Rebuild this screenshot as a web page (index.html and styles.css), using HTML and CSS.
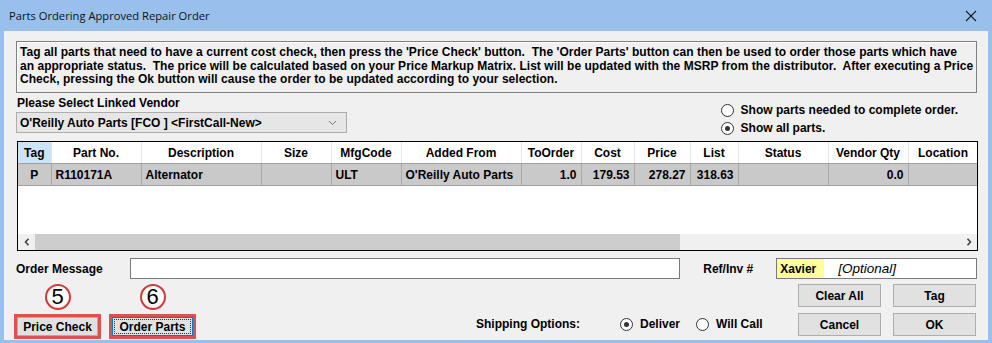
FILE: index.html
```html
<!DOCTYPE html>
<html lang="en">
<head>
  <meta charset="UTF-8" />
  <title>Parts Ordering Approved Repair Order</title>
  <link rel="stylesheet" href="styles.css">
</head>
<body>

<div class="window">
  <div class="titlebar">
    <span class="title">Parts Ordering Approved Repair Order</span>
    <svg class="close" width="12" height="12" viewBox="0 0 12 12"><path d="M1 1L11 11M11 1L1 11" stroke="#1a1a1a" stroke-width="1.1"/></svg>
  </div>

  <div class="client">
    <div class="notice">
      Tag all parts that need to have a current cost check, then press the 'Price Check' button.&nbsp; The 'Order Parts' button can then be used to order those parts which have<br>
      an appropriate status.&nbsp; The price will be calculated based on your Price Markup Matrix. List will be updated with the MSRP from the distributor.&nbsp; After executing a Price<br>
      Check, pressing the Ok button will cause the order to be updated according to your selection.
    </div>

    <div class="vendor-row">
      <div class="vendor">
        <div class="lbl">Please Select Linked Vendor</div>
        <div class="combo">
          <span>O'Reilly Auto Parts [FCO ] &lt;FirstCall-New&gt;</span>
          <svg width="9" height="6" viewBox="0 0 9 6"><path d="M1 1L4.5 4.5L8 1" fill="none" stroke="#777" stroke-width="1"/></svg>
        </div>
      </div>
      <div class="show-opts">
        <label class="radio"><span class="dot"></span>Show parts needed to complete order.</label>
        <label class="radio"><span class="dot on"></span>Show all parts.</label>
      </div>
    </div>

    <div class="grid">
      <table>
        <colgroup>
          <col style="width:33px"><col style="width:90px"><col style="width:120px"><col style="width:70px">
          <col style="width:70px"><col style="width:120px"><col style="width:60px"><col style="width:53px">
          <col style="width:56px"><col style="width:48px"><col style="width:90px"><col style="width:80px">
          <col style="width:70px">
        </colgroup>
        <thead>
          <tr>
            <th class="sel">Tag</th><th>Part No.</th><th>Description</th><th>Size</th><th>MfgCode</th>
            <th>Added From</th><th>ToOrder</th><th>Cost</th><th>Price</th><th>List</th>
            <th>Status</th><th>Vendor Qty</th><th>Location</th>
          </tr>
        </thead>
        <tbody>
          <tr>
            <td class="c">P</td><td>R110171A</td><td>Alternator</td><td></td><td>ULT</td>
            <td>O'Reilly Auto Parts</td><td class="n">1.0</td><td class="n">179.53</td><td class="n">278.27</td>
            <td class="n">318.63</td><td></td><td class="n">0.0</td><td></td>
          </tr>
        </tbody>
      </table>
      <div class="hscroll">
        <span class="arrow"><svg width="6" height="8" viewBox="0 0 6 8"><path d="M4.5 0.8L1.5 4L4.5 7.2" fill="none" stroke="#444" stroke-width="1.6"/></svg></span>
        <div class="track"><div class="thumb"></div></div>
        <span class="arrow"><svg width="6" height="8" viewBox="0 0 6 8"><path d="M1.5 0.8L4.5 4L1.5 7.2" fill="none" stroke="#444" stroke-width="1.6"/></svg></span>
      </div>
    </div>

    <div class="msg-row">
      <span class="lbl msg-lbl">Order Message</span>
      <div class="field msg-field"></div>
      <span class="lbl ref-lbl">Ref/Inv #</span>
      <div class="field ref-field"><span class="hl">Xavier</span><em>[Optional]</em></div>
    </div>

    <div class="bottom">
      <div class="steps">
        <div class="step">
          <span class="badge">5</span>
          <div class="mark"><button class="btn">Price Check</button></div>
        </div>
        <div class="step">
          <span class="badge">6</span>
          <div class="mark"><button class="btn focus">Order Parts</button></div>
        </div>
      </div>
      <div class="shipping">
        <span class="lbl ship-lbl">Shipping Options:</span>
        <label class="radio"><span class="dot on"></span>Deliver</label>
        <label class="radio"><span class="dot"></span>Will Call</label>
      </div>
      <div class="actions">
        <button class="btn">Clear All</button>
        <button class="btn">Tag</button>
        <button class="btn">Cancel</button>
        <button class="btn">OK</button>
      </div>
    </div>
  </div>
</div>

</body>
</html>
```

FILE: styles.css
```css
body {
  margin: 0;
  padding: 0;
  font-family: "Liberation Sans", Arial, sans-serif;
  font-size: 12px;
  color: #000;
  overflow: hidden;
}
.window {
  width: 992px;
  height: 343px;
  background-color: #99c0ec;
  display: flex;
  flex-direction: column;
  box-sizing: border-box;
  padding: 0 4px 3px 4px;
}
.titlebar {
  height: 31px;
  display: flex;
  align-items: center;
  justify-content: space-between;
  padding: 0 11px 0 5px;
}
.title {
  font-family: "Open Sans", "Liberation Sans", sans-serif;
  font-size: 11.2px;
  color: #111;
}
.client {
  flex: 1;
  background-color: #f0f0f0;
  padding: 10px 11px 0 12px;
  display: flex;
  flex-direction: column;
  font-weight: bold;
}
.notice {
  border: 1px solid #7f7f7f;
  box-shadow: inset 1px 1px 0 #fff;
  padding: 4px 3px 5px 3px;
  line-height: 13.5px;
  height: 41px;
  white-space: nowrap;
  letter-spacing: 0.03px;
}
.vendor-row {
  display: flex;
  justify-content: space-between;
  margin-top: 3px;
  height: 45px;
}
.lbl {
  font-weight: bold;
}
.vendor .lbl {
  padding-left: 1px;
  line-height: 14px;
}
.combo {
  margin-top: 2px;
  border: 1px solid #adadad;
  background-color: #e6e6e6;
  display: flex;
  align-items: center;
  justify-content: space-between;
  padding: 0 9px 0 3px;
  box-sizing: border-box;
  width: 331px;
  height: 21px;
}
.show-opts {
  display: flex;
  flex-direction: column;
  padding-top: 7px;
  padding-right: 19px;
  gap: 4px;
}
.radio {
  display: flex;
  align-items: center;
  gap: 7px;
  font-weight: bold;
  line-height: 14px;
}
.dot {
  width: 11px;
  height: 11px;
  border: 1px solid #333;
  border-radius: 50%;
  background-color: #fff;
  position: relative;
}
.dot.on::after {
  content: "";
  position: absolute;
  left: 3px;
  top: 3px;
  width: 5px;
  height: 5px;
  border-radius: 50%;
  background-color: #333;
}
.grid {
  margin-left: 1px;
  width: 961px;
  height: 110px;
  box-sizing: border-box;
  border: 1px solid #000;
  background-color: #fff;
  display: flex;
  flex-direction: column;
  justify-content: space-between;
  overflow: hidden;
}
.grid table {
  border-collapse: collapse;
  table-layout: fixed;
  width: 960px;
}
.grid th {
  height: 21px;
  padding: 0;
  font-weight: bold;
  text-align: center;
  white-space: nowrap;
  border-right: 1px solid #e5e5e5;
  border-bottom: 1px solid #a0a0a0;
  background-color: #fff;
}
.grid th.sel {
  background-color: #cce4f7;
}
.grid td {
  height: 21px;
  padding: 0 4px;
  background-color: #c9c9c9;
  border-right: 1px solid #a8a8a8;
  border-bottom: 1px solid #a0a0a0;
  white-space: nowrap;
  overflow: hidden;
}
.grid td.c {
  text-align: center;
}
.grid td.n {
  text-align: right;
}
.hscroll {
  height: 16px;
  display: flex;
  align-items: center;
  background-color: #f0f0f0;
}
.arrow {
  width: 17px;
  display: flex;
  justify-content: center;
  align-items: center;
}
.track {
  flex: 1;
  height: 100%;
}
.thumb {
  width: 645px;
  height: 100%;
  background-color: #cdcdcd;
}
.msg-row {
  display: flex;
  align-items: center;
  margin-top: 7px;
  height: 21px;
}
.msg-lbl {
  width: 114px;
}
.field {
  border: 1px solid #7a7a7a;
  background-color: #fff;
  box-sizing: border-box;
  height: 21px;
}
.msg-field {
  width: 551px;
}
.ref-lbl {
  margin-left: 23px;
  width: 73px;
}
.ref-field {
  width: 201px;
  display: flex;
  align-items: center;
}
.hl {
  background-color: #ffff99;
  height: 100%;
  display: flex;
  align-items: center;
  padding: 0 8px 0 3px;
}
.ref-field em {
  font-weight: normal;
  font-style: italic;
  font-size: 13.5px;
  margin-left: 14px;
}
.bottom {
  display: flex;
  align-items: flex-end;
  margin-top: 5px;
}
.steps {
  display: flex;
  gap: 8px;
  margin-left: -2px;
}
.step {
  display: flex;
  flex-direction: column;
  align-items: center;
  gap: 4px;
}
.badge {
  width: 22px;
  height: 22px;
  border: 2px solid #d0393b;
  border-radius: 50%;
  background: radial-gradient(circle at 50% 35%, #fff 55%, #f2dada);
  font-family: "Liberation Sans", Arial, sans-serif;
  font-weight: normal;
  font-size: 22px;
  line-height: 22px;
  text-align: center;
}
.mark {
  border: 3px solid #d9534f;
  display: flex;
}
.btn {
  font-family: "Liberation Sans", Arial, sans-serif;
  font-size: 12px;
  font-weight: bold;
  background-color: #e1e1e1;
  border: 1px solid #adadad;
  color: #000;
  padding: 0;
  height: 22px;
  width: 83px;
}
.mark .btn {
  width: 81px;
  height: 19px;
}
.btn.focus {
  border: 1px solid #0078d7;
  outline: 1px dotted #333;
  outline-offset: -3px;
}
.shipping {
  display: flex;
  align-items: center;
  gap: 16px;
  margin-left: 280px;
  height: 24px;
  margin-bottom: 3px;
}
.ship-lbl {
  margin-right: 24px;
}
.actions {
  display: grid;
  grid-template-columns: 83px 83px;
  grid-auto-rows: 23px;
  gap: 6px 12px;
  margin-left: auto;
  margin-right: 1px;
  margin-bottom: 3px;
}
.actions .btn {
  height: 23px;
}
```
